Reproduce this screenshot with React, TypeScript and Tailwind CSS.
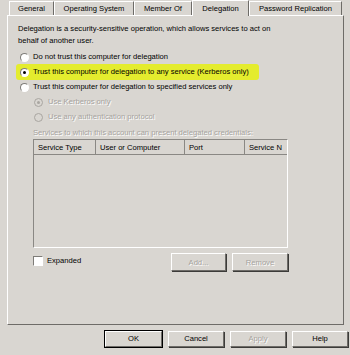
import React from "react";

const raised =
  "border border-t-white border-l-white border-r-[#6e6c68] border-b-[#6e6c68] shadow-[1px_1px_0_#3c3b39]";

function Radio({ checked, disabled }: { checked?: boolean; disabled?: boolean }) {
  return (
    <span
      className={`relative inline-flex h-[9px] w-[9px] shrink-0 items-center justify-center rounded-full border ${
        disabled ? "border-[#a9a6a1] bg-[#d9d6d1]" : "border-t-[#7e7c78] border-l-[#7e7c78] border-r-white border-b-white bg-white"
      }`}
    >
      {checked && (
        <span className={`h-[3px] w-[3px] rounded-full ${disabled ? "bg-[#a9a6a1]" : "bg-black"}`} />
      )}
    </span>
  );
}

function Tab({ label, selected, w }: { label: string; selected?: boolean; w: string }) {
  return (
    <div
      className={`${w} flex items-center justify-center border-l border-t border-r ${
        selected
          ? "h-[16px] -mb-[1px] border-l-white border-t-white border-r-[#6e6c68] bg-[#d9d6d1] z-10"
          : "h-[14px] border-l-white border-t-white border-r-[#6e6c68]"
      }`}
    >
      <span className="leading-none">{label}</span>
    </div>
  );
}

export default function App() {
  return (
    <div
      className="relative h-[355px] w-[350px] overflow-hidden bg-[#d9d6d1] text-[7.6px] text-black"
      style={{ fontFamily: '"Liberation Sans", Arial, sans-serif' }}
    >
      {/* tabs */}
      <div className="flex items-end pl-[9px] h-[15px]">
        <Tab label="General" w="w-[45px]" />
        <Tab label="Operating System" w="w-[80px]" />
        <Tab label="Member Of" w="w-[58px]" />
        <Tab label="Delegation" selected w="w-[57px]" />
        <Tab label="Password Replication" w="w-[93px]" />
      </div>

      {/* panel */}
      <div className="ml-[7px] w-[337px] h-[310px] border border-t-white border-l-white border-r-[#6e6c68] border-b-[#6e6c68] pl-[10px] pt-[7px]">
        <div className="leading-[11.5px]">
          <div>Delegation is a security-sensitive operation, which allows services to act on</div>
          <div>behalf of another user.</div>
        </div>

        <div className="mt-[6px] flex flex-col gap-[5px] pl-[2px]">
          <div className="flex h-[10px] items-center gap-[4px]">
            <Radio />
            <span>Do not trust this computer for delegation</span>
          </div>
          <div className="relative flex h-[10px] items-center gap-[4px]">
            <span className="absolute -left-[4px] -top-[3px] h-[16px] w-[243px] rounded-[3px] bg-[#e4ec2e]" />
            <span className="relative flex items-center gap-[4px]">
              <Radio checked />
              <span>Trust this computer for delegation to any service (Kerberos only)</span>
            </span>
          </div>
          <div className="flex h-[10px] items-center gap-[4px]">
            <Radio />
            <span>Trust this computer for delegation to specified services only</span>
          </div>
          <div className="flex h-[10px] items-center gap-[5px] pl-[14px] text-[#a6a39e] [text-shadow:1px_1px_0_#fff]">
            <Radio checked disabled />
            <span>Use Kerberos only</span>
          </div>
          <div className="flex h-[10px] items-center gap-[5px] pl-[14px] text-[#a6a39e] [text-shadow:1px_1px_0_#fff]">
            <Radio disabled />
            <span>Use any authentication protocol</span>
          </div>
        </div>

        <div className="mt-[5px] pl-[15px] text-[#a6a39e] [text-shadow:1px_1px_0_#fff]">
          Services to which this account can present delegated credentials:
        </div>

        <div className="ml-[15px] mt-[1px] h-[109px] w-[255px] border border-t-[#8a8884] border-l-[#8a8884] border-r-white border-b-white">
          <div className="flex h-[15px] border-b border-b-[#8a8884] bg-[#d9d6d1]">
            <div className="flex w-[62px] items-center border-r border-r-[#8a8884] pl-[4px]">Service Type</div>
            <div className="flex w-[89px] items-center border-r border-r-[#8a8884] pl-[4px]">User or Computer</div>
            <div className="flex w-[60px] items-center border-r border-r-[#8a8884] pl-[4px]">Port</div>
            <div className="flex flex-1 items-center whitespace-nowrap pl-[4px]">Service N</div>
          </div>
        </div>

        <div className="mt-[5px] flex items-start pl-[15px]">
          <div className="mt-[2px] flex items-center gap-[4px]">
            <span className="h-[10px] w-[10px] border border-t-[#7e7c78] border-l-[#7e7c78] border-r-white border-b-white bg-white" />
            <span>Expanded</span>
          </div>
          <div className="ml-auto mr-[55px] flex gap-[6px]">
            <button className={`h-[18px] w-[55px] ${raised} text-[#a6a39e] [text-shadow:1px_1px_0_#fff]`}>Add...</button>
            <button className={`h-[18px] w-[56px] ${raised} text-[#a6a39e] [text-shadow:1px_1px_0_#fff]`}>Remove</button>
          </div>
        </div>
      </div>

      {/* bottom buttons */}
      <div className="mt-[6px] flex gap-[6px] pl-[105px]">
        <button className={`h-[16px] w-[57px] ${raised} outline outline-1 outline-black`}>OK</button>
        <button className={`h-[16px] w-[56px] ${raised}`}>Cancel</button>
        <button className={`h-[16px] w-[56px] ${raised} text-[#a6a39e] [text-shadow:1px_1px_0_#fff]`}>Apply</button>
        <button className={`h-[16px] w-[56px] ${raised}`}>Help</button>
      </div>
    </div>
  );
}
